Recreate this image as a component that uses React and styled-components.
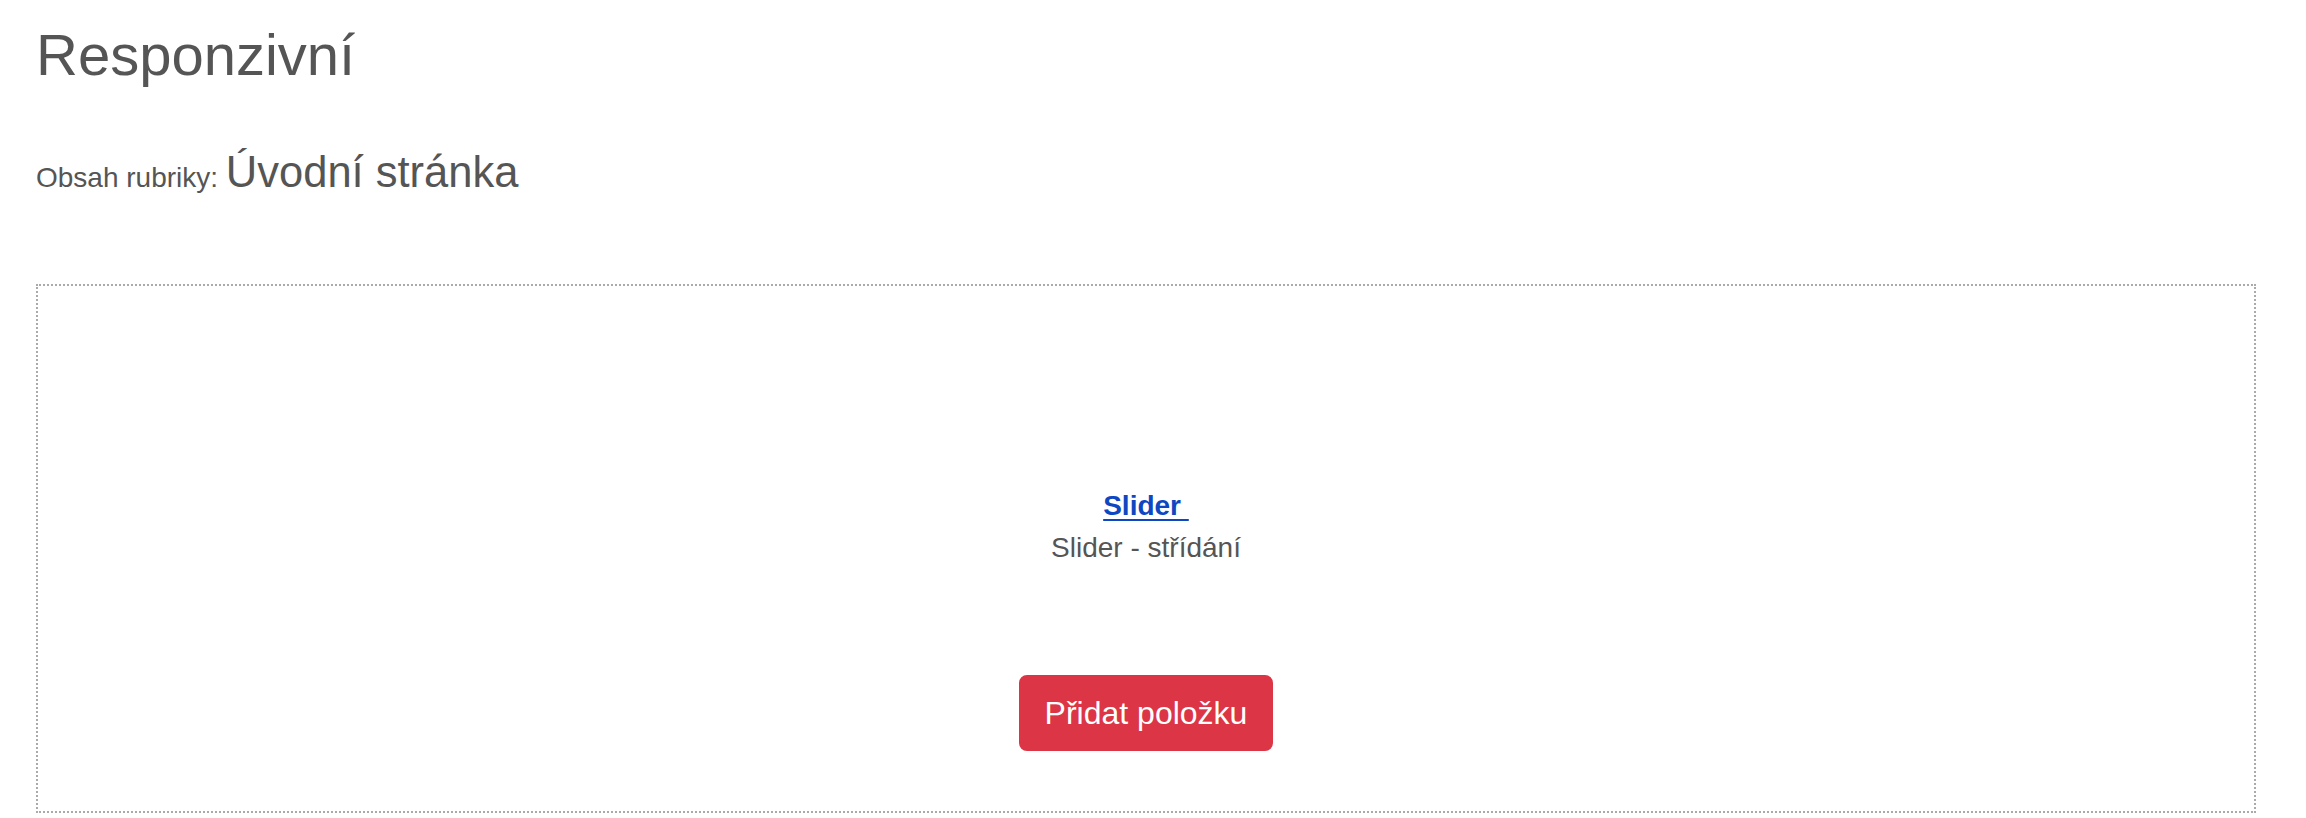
import React from 'react';
import styled, { createGlobalStyle } from 'styled-components';

const GlobalStyle = createGlobalStyle`
  html, body {
    margin: 0;
    padding: 0;
    background: #ffffff;
  }
  body {
    font-family: "Liberation Sans", Arial, Helvetica, sans-serif;
    color: #555555;
  }
`;

const Page = styled.div`
  padding: 20px 50px 0 36px;
`;

const Title = styled.h1`
  margin: 0;
  font-size: 58px;
  font-weight: 400;
  line-height: 1.2;
  color: #555555;
`;

const Section = styled.div`
  margin-top: 57px;
  font-size: 43.5px;
  line-height: 50px;
  color: #555555;
`;

const SectionLabel = styled.span`
  font-size: 28px;
`;

const Box = styled.div`
  margin-top: 81px;
  border: 2px dotted #aaaaaa;
  padding: 199px 24px 60px;
  display: flex;
  flex-direction: column;
  align-items: center;
`;

const Item = styled.div`
  text-align: center;
  font-size: 28px;
  line-height: 42px;
  color: #555555;
`;

const ItemLink = styled.a`
  display: block;
  font-weight: 700;
  color: #0d47c1;
  text-decoration: underline;
  text-decoration-thickness: 2px;
  text-underline-offset: 4px;
`;

const AddButton = styled.button`
  margin-top: 106px;
  padding: 12px 24px;
  border: 2px solid #dc3545;
  border-radius: 8px;
  background: #dc3545;
  color: #ffffff;
  font-family: inherit;
  font-size: 32px;
  line-height: 48px;
  cursor: pointer;
`;

export default function App() {
  return (
    <Page>
      <GlobalStyle />
      <Title>Responzivní</Title>
      <Section>
        <SectionLabel>Obsah rubriky: </SectionLabel>Úvodní stránka
      </Section>
      <Box>
        <Item>
          <ItemLink href="#">Slider&nbsp;</ItemLink>
          Slider - střídání
        </Item>
        <AddButton type="button">Přidat položku</AddButton>
      </Box>
    </Page>
  );
}
